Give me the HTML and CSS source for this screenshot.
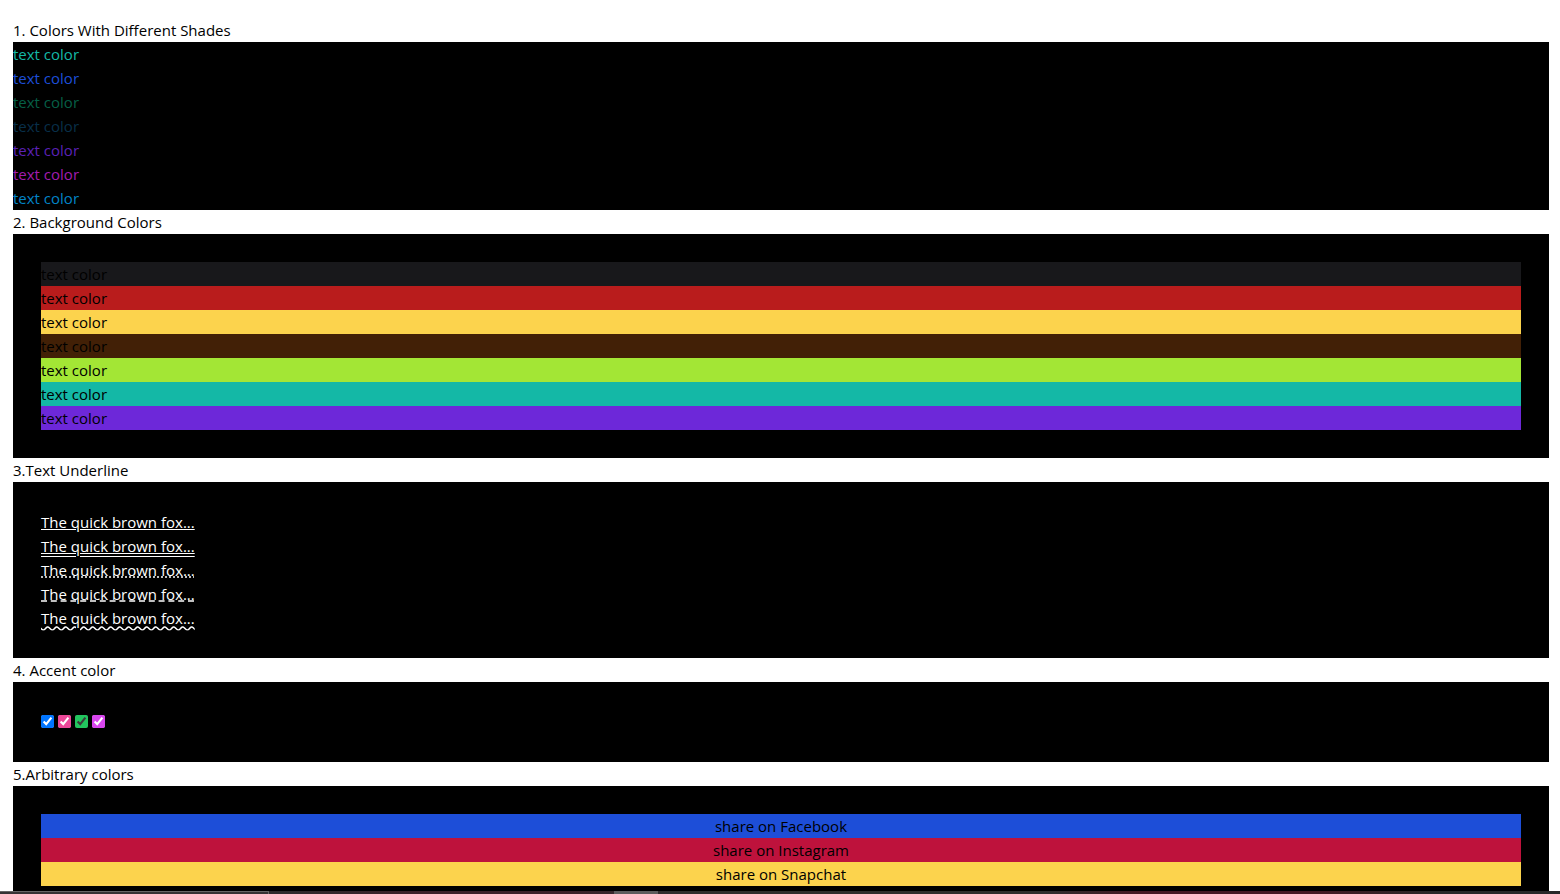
FILE: index.html
```html
<!DOCTYPE html>
<html lang="en">
<head>
<meta charset="utf-8">
<meta name="viewport" content="width=device-width, initial-scale=1">
<title>Colors</title>
<link rel="stylesheet" href="styles.css">
</head>
<body>
<main class="page">
  <h2 class="heading">1. Colors With Different Shades</h2>
  <section class="panel">
    <p class="text-teal">text color</p>
    <p class="text-blue">text color</p>
    <p class="text-emerald">text color</p>
    <p class="text-sky-dark">text color</p>
    <p class="text-violet">text color</p>
    <p class="text-fuchsia">text color</p>
    <p class="text-sky">text color</p>
  </section>

  <h2 class="heading">2. Background Colors</h2>
  <section class="panel padded">
    <p class="bg-zinc">text color</p>
    <p class="bg-red">text color</p>
    <p class="bg-amber">text color</p>
    <p class="bg-brown">text color</p>
    <p class="bg-lime">text color</p>
    <p class="bg-teal">text color</p>
    <p class="bg-violet">text color</p>
  </section>

  <h2 class="heading">3.Text Underline</h2>
  <section class="panel padded underlines">
    <p class="line-solid">The quick brown fox...</p>
    <p class="line-double">The quick brown fox...</p>
    <p class="line-dotted">The quick brown fox...</p>
    <p class="line-dashed">The quick brown fox...</p>
    <p class="line-wavy">The quick brown fox...</p>
  </section>

  <h2 class="heading">4. Accent color</h2>
  <section class="panel padded">
    <div class="checks">
      <input type="checkbox" aria-label="Default accent" checked>
      <input type="checkbox" class="accent-pink" aria-label="Pink accent" checked>
      <input type="checkbox" class="accent-green" aria-label="Green accent" checked>
      <input type="checkbox" class="accent-fuchsia" aria-label="Fuchsia accent" checked>
    </div>
  </section>

  <h2 class="heading">5.Arbitrary colors</h2>
  <section class="panel padded share">
    <p class="bg-facebook">share on Facebook</p>
    <p class="bg-instagram">share on Instagram</p>
    <p class="bg-amber">share on Snapchat</p>
  </section>
</main>
<footer class="taskbar">
  <div class="task-search"></div>
  <div class="task-active"></div>
</footer>
</body>
</html>
```
FILE: styles.css
```css
* { box-sizing: border-box; }

body {
  margin: 0;
  height: 100vh;
  display: flex;
  flex-direction: column;
  overflow: hidden;
  background: #fff;
  color: #000;
  font: 400 15px/24px "Segoe UI", "Open Sans", "Noto Sans", sans-serif;
}

.page {
  flex: 1;
  min-height: 0;
  overflow: hidden;
  padding: 18px 11px 0 13px;
}

.heading, .panel p { margin: 0; }
.heading { font: inherit; }

.panel { background: #000; }
.padded { padding: 28px; }

.text-teal { color: #14b8a6; }
.text-blue { color: #1d4ed8; }
.text-emerald { color: #065f46; }
.text-sky-dark { color: #082f49; }
.text-violet { color: #5b21b6; }
.text-fuchsia { color: #a21caf; }
.text-sky { color: #0284c7; }

.bg-zinc { background: #18181b; }
.bg-red { background: #b91c1c; }
.bg-amber { background: #fcd34d; }
.bg-brown { background: #422006; }
.bg-lime { background: #a3e635; }
.bg-teal { background: #14b8a6; }
.bg-violet { background: #6d28d9; }
.bg-facebook { background: #1d4ed8; }
.bg-instagram { background: #be123c; }

.underlines { color: #fff; }
.underlines p { text-decoration-line: underline; }
.line-double { text-decoration-style: double; }
.line-dotted { text-decoration-style: dotted; }
.line-dashed { text-decoration-style: dashed; }
.line-wavy { text-decoration-style: wavy; }

.checks {
  display: flex;
  align-items: center;
  gap: 4px;
  height: 24px;
}
.checks input { width: 13px; height: 13px; margin: 0 0 2px; }
.accent-pink { accent-color: #ec4899; }
.accent-green { accent-color: #22c55e; }
.accent-fuchsia { accent-color: #d946ef; }

.share { text-align: center; }

.taskbar {
  flex: none;
  display: flex;
  height: 3px;
  background: linear-gradient(90deg, #2d2b2c 18%, #3c2028 27%, #3c2028 36%, #2e2e2e 43%, #2e2e2e 67%, #451923 73%, #451923 84%, #282828 92%);
}
.task-search {
  width: 269px;
  background: #353334;
  border: solid #656565;
  border-width: 1px 1px 0 0;
}
.task-active { width: 44px; margin-left: 345px; background: #5c5c5c; }
```
